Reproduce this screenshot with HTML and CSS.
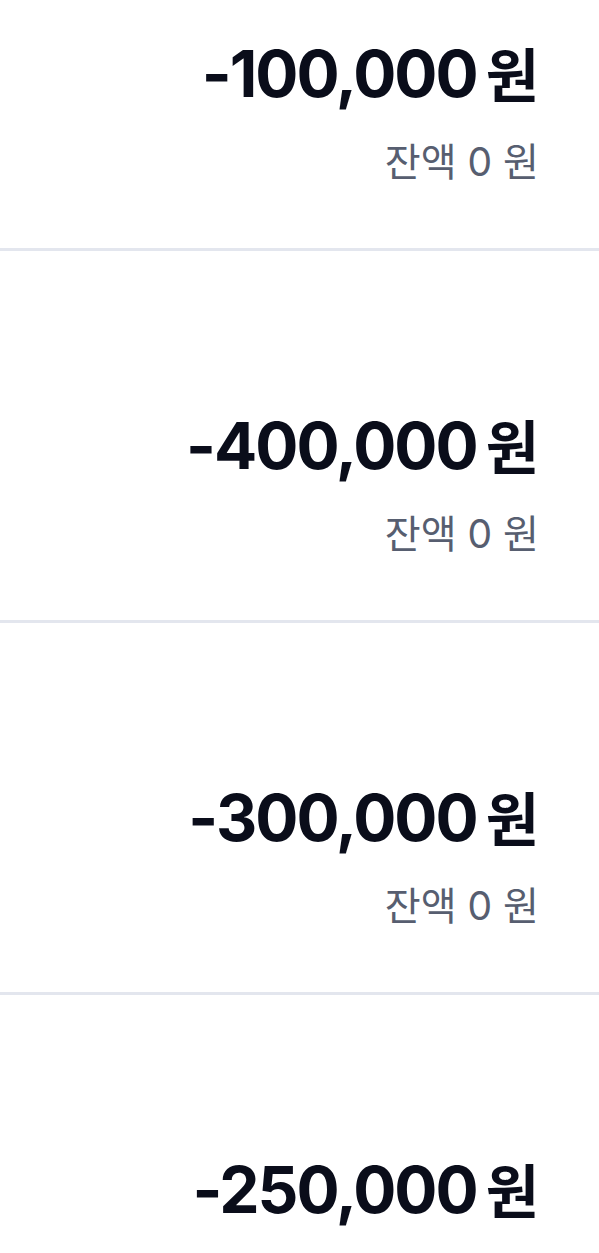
FILE: index.html
```html
<!DOCTYPE html>
<html lang="ko">
<head>
<meta charset="utf-8">
<title>내역</title>
<link rel="stylesheet" href="styles.css">
</head>
<body>
<ul class="list">
  <li class="row">
    <div class="amount">-100,000<span class="unit">원</span></div>
    <div class="balance">잔액 0 원</div>
  </li>
  <li class="row">
    <div class="amount">-400,000<span class="unit">원</span></div>
    <div class="balance">잔액 0 원</div>
  </li>
  <li class="row">
    <div class="amount">-300,000<span class="unit">원</span></div>
    <div class="balance">잔액 0 원</div>
  </li>
  <li class="row">
    <div class="amount">-250,000<span class="unit">원</span></div>
    <div class="balance">잔액 0 원</div>
  </li>
</ul>
</body>
</html>
```

FILE: styles.css
```css
html, body {
  margin: 0;
  padding: 0;
  background: #ffffff;
}
body {
  overflow: hidden;
  height: 1253px;
  font-family: Inter, "Noto Sans CJK KR", sans-serif;
}
.list {
  list-style: none;
  margin: -121px 0 0 0;
  padding: 0;
}
.row {
  display: flex;
  flex-direction: column;
  align-items: flex-end;
  height: 369px;
  box-sizing: content-box;
  padding: 0 60px 0 0;
  border-bottom: 3px solid #e3e6ee;
}
.amount {
  margin-top: 155px;
  font-size: 64px;
  line-height: 76px;
  font-weight: 700;
  color: #0a0d1a;
  letter-spacing: -2px;
  white-space: nowrap;
}
.unit {
  margin-left: 9px;
  font-size: 58px;
  letter-spacing: 0;
  font-family: "Noto Sans CJK KR", sans-serif;
}
.balance {
  margin-top: 26px;
  font-size: 39px;
  line-height: 48px;
  font-weight: 400;
  color: #575e70;
}
```
